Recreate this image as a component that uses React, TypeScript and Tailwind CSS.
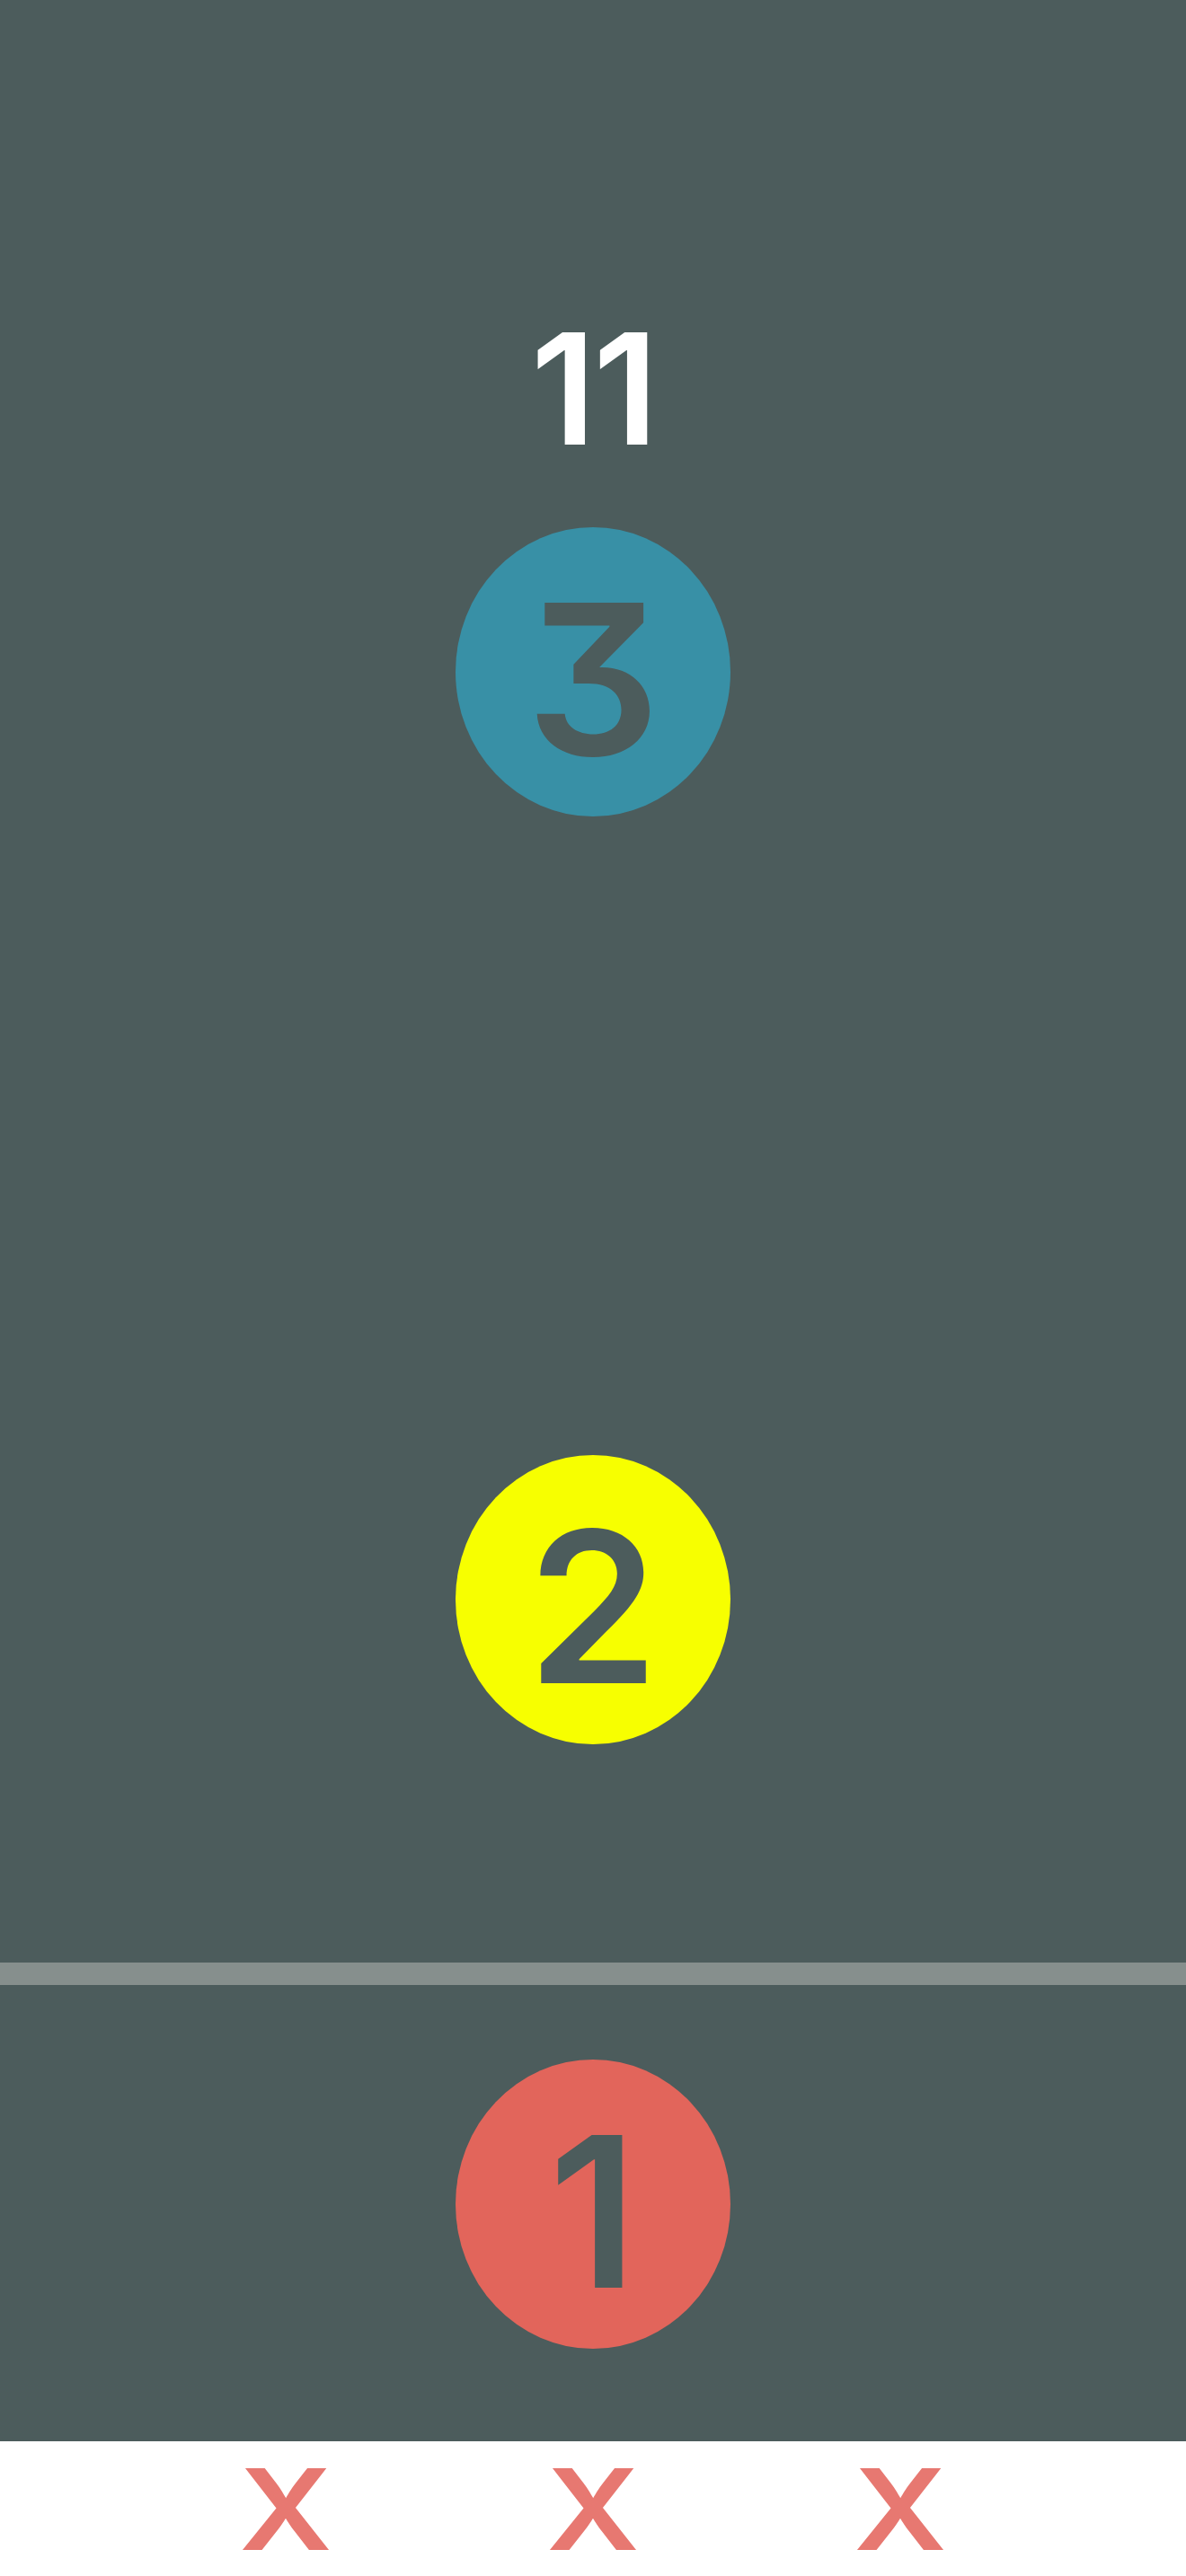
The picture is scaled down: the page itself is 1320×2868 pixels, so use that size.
import { useState } from 'react'

type Ball = { n: number; color: string }

const falling: Ball = { n: 3, color: 'bg-[#3890a6]' }
const middle: Ball = { n: 2, color: 'bg-[#f7ff00]' }
const ground: Ball = { n: 1, color: 'bg-[#e2655b]' }

function Token({ ball }: { ball: Ball }) {
  return (
    <div className={`flex h-[322px] w-[306px] items-center justify-center rounded-[50%] ${ball.color}`}>
      <span className="pt-4 text-[234px] leading-none font-semibold text-[#4c5c5c] [font-feature-settings:'cv09']">
        {ball.n}
      </span>
    </div>
  )
}

export default function App() {
  const [score] = useState(11)
  const [lives] = useState(3)

  return (
    <div className="flex h-[2868px] w-full flex-col font-['Inter',sans-serif]">
      <div className="flex h-[2718px] flex-col items-center bg-[#4c5c5c]">
        <div className="mt-[346px] text-[172px] leading-none font-semibold tracking-[-0.02em] text-white [font-feature-settings:'cv09']">
          {score}
        </div>

        <div className="mt-[69px]">
          <Token ball={falling} />
        </div>

        <div className="mt-[711px]">
          <Token ball={middle} />
        </div>

        <div className="mt-[243px] h-[25px] w-full bg-[#868f8d]" />

        <div className="mt-[83px]">
          <Token ball={ground} />
        </div>
      </div>

      {/* remaining lives */}
      <div className="flex flex-1 items-center justify-center gap-[246px] bg-white">
        {Array.from({ length: lives }).map((_, i) => (
          <span key={i} className="w-[96px] scale-x-115 text-center text-[125px] leading-none font-semibold text-[#e77871]">
            X
          </span>
        ))}
      </div>
    </div>
  )
}
